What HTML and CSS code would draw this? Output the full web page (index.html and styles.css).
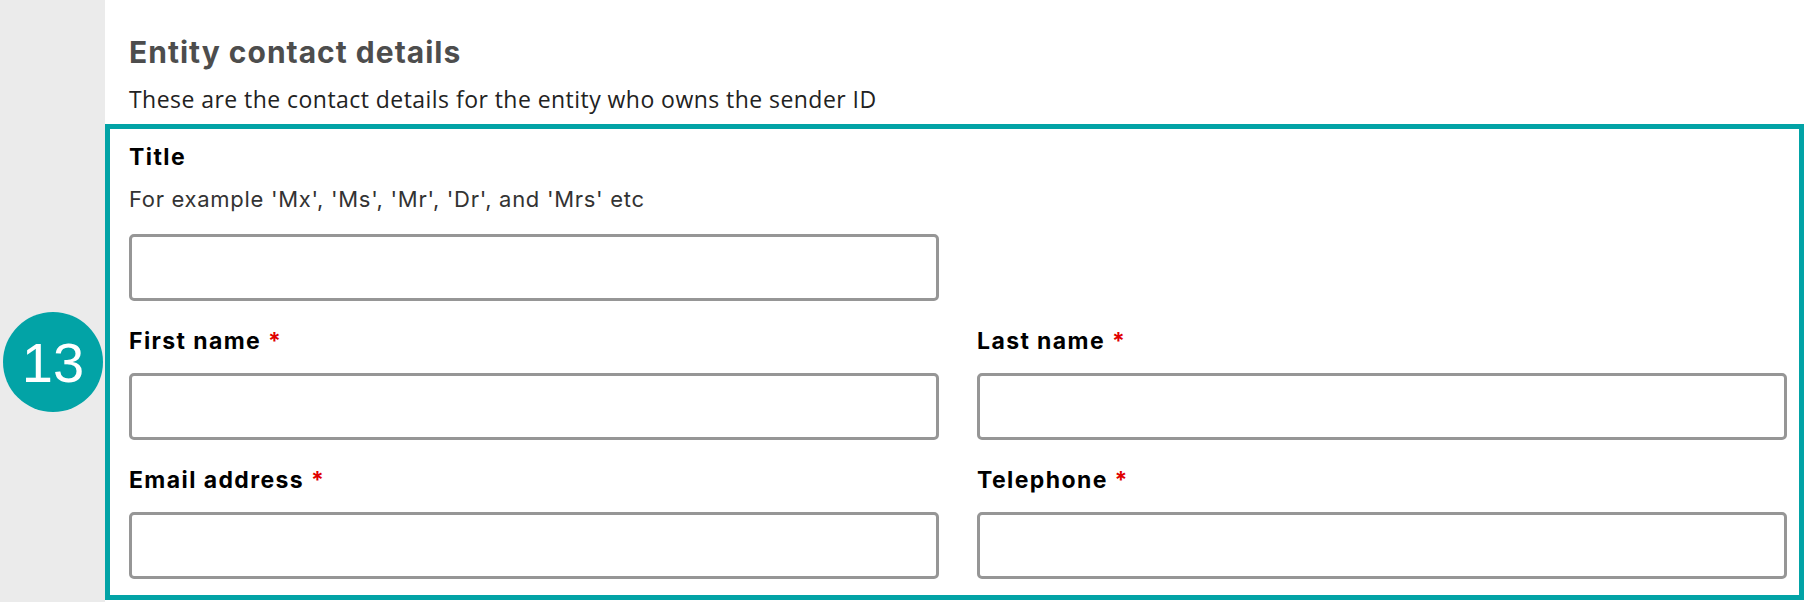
FILE: index.html
```html
<!DOCTYPE html>
<html lang="en">
<head>
    <meta charset="UTF-8">
    <meta name="viewport" content="width=device-width, initial-scale=1.0">
    <title>Entity contact details</title>
    <link rel="stylesheet" href="styles.css">
</head>
<body>

    <div class="page">
        <!-- Left rail -->
        <div class="rail"></div>

        <!-- Main Content Section -->
        <div class="content">
            <h2>Entity contact details</h2>
            <p class="lead">These are the contact details for the entity who owns the sender ID</p>

            <form class="contact-box" id="contact-form">
                <div class="field">
                    <label for="title" class="with-hint">Title</label>
                    <p class="hint">For example 'Mx', 'Ms', 'Mr', 'Dr', and 'Mrs' etc</p>
                    <input type="text" id="title">
                </div>
                <div class="field-spacer"></div>

                <div class="field">
                    <label for="first-name">First name <span class="req">*</span></label>
                    <input type="text" id="first-name">
                </div>
                <div class="field">
                    <label for="last-name">Last name <span class="req">*</span></label>
                    <input type="text" id="last-name">
                </div>

                <div class="field">
                    <label for="email">Email address <span class="req">*</span></label>
                    <input type="text" id="email">
                </div>
                <div class="field">
                    <label for="telephone">Telephone <span class="req">*</span></label>
                    <input type="text" id="telephone">
                </div>
            </form>
        </div>
    </div>

    <!-- Step marker -->
    <span class="step-badge">13</span>

</body>
</html>
```

FILE: styles.css
```css
body {
    margin: 0;
    padding: 0;
    background-color: #ffffff;
    font-family: 'Inter', 'Liberation Sans', sans-serif;
    position: relative;
    height: 602px;
    overflow: hidden;
}
.page {
    display: flex;
    height: 602px;
}
.rail {
    width: 105px;
    flex: none;
    background-color: #ebebeb;
}
.content {
    flex: 1;
    padding-top: 34px;
}
.content h2 {
    margin: 0 0 14px 24px;
    font-size: 30px;
    line-height: 36px;
    font-weight: 700;
    letter-spacing: 1px;
    color: #4d4d4d;
}
.lead {
    margin: 0 0 10px 24px;
    font-family: 'Open Sans', sans-serif;
    font-size: 23px;
    line-height: 30px;
    letter-spacing: 0.45px;
    color: #222222;
}
.contact-box {
    display: grid;
    grid-template-columns: 1fr 1fr;
    column-gap: 38px;
    row-gap: 25px;
    margin-right: 6px;
    padding: 13px 12px 16px 19px;
    border: 5px solid #02a3a6;
}
.field label {
    display: block;
    font-size: 23px;
    line-height: 30px;
    font-weight: 700;
    letter-spacing: 1.4px;
    color: #000000;
    margin-bottom: 17px;
}
.field label.with-hint {
    margin-bottom: 12px;
}
.hint {
    margin: 0 0 20px 0;
    font-size: 22px;
    line-height: 30px;
    font-weight: 400;
    letter-spacing: 0.7px;
    color: #333333;
}
.req {
    color: #e00000;
}
input {
    display: block;
    box-sizing: border-box;
    width: 100%;
    height: 67px;
    margin: 0;
    padding: 10px 14px;
    font-size: 20px;
    border: 3px solid #969696;
    border-radius: 5px;
    background: #ffffff;
}
input:focus {
    border-color: #02a3a6;
    outline: none;
}
.step-badge {
    position: absolute;
    left: 3px;
    top: 312px;
    width: 100px;
    height: 100px;
    border-radius: 50%;
    background-color: #02a3a6;
    color: #ffffff;
    font-family: 'Liberation Sans', Arial, sans-serif;
    font-size: 56px;
    display: flex;
    align-items: center;
    justify-content: center;
}
```
